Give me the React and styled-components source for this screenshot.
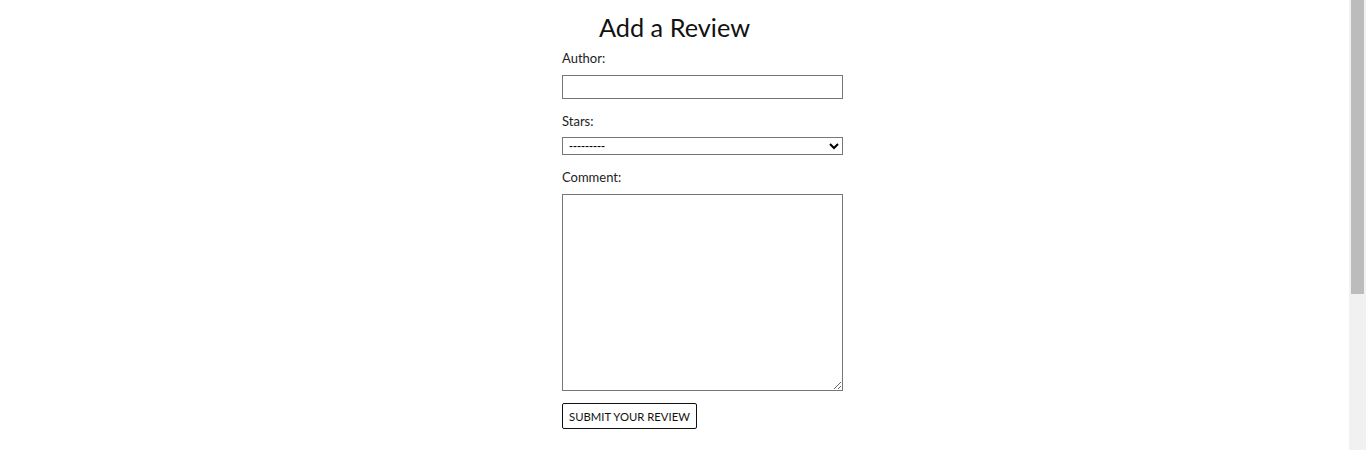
import React from "react"
import styled, { createGlobalStyle } from "styled-components"

const Global = createGlobalStyle`
  html, body {
    margin: 0;
    padding: 0;
    background: #fff;
    overflow: hidden;
  }
  body {
    font-family: 'Lato', 'Liberation Sans', sans-serif;
    color: #111;
  }
`

const Page = styled.div`
  display: flex;
  height: 450px;
`

const Main = styled.main`
  flex: 1;
  display: flex;
  flex-direction: column;
  align-items: center;
`

const Title = styled.h2`
  margin: 10px 0 0;
  height: 34px;
  line-height: 34px;
  font-size: 25.3px;
  font-weight: 400;
  color: #111;
`

const Form = styled.form`
  width: 225px;
  display: flex;
  flex-direction: column;
  align-items: flex-start;
`

const Label = styled.label`
  display: block;
  margin-top: ${p => p.$gap}px;
  height: 16px;
  line-height: 16px;
  font-size: 13px;
  color: #222;
`

const Input = styled.input`
  box-sizing: border-box;
  width: 281px;
  height: 24px;
  margin: 9px 0 0;
  border: 1px solid #767676;
  border-radius: 0;
  padding: 2px 4px;
  font-family: inherit;
`

const Select = styled.select`
  box-sizing: border-box;
  width: 281px;
  height: 18px;
  margin: 8px 0 0;
  border: 1px solid #767676;
  border-radius: 0;
  background: #fff;
  padding: 0 2px;
  font-family: 'Liberation Sans', sans-serif;
  font-size: 12px;
  color: #000;
`

const TextArea = styled.textarea`
  box-sizing: border-box;
  width: 281px;
  height: 197px;
  margin: 9px 0 0;
  border: 1px solid #767676;
  border-radius: 0;
  font-family: inherit;
`

const Button = styled.button`
  box-sizing: border-box;
  margin-top: 12px;
  height: 26px;
  width: 135px;
  padding: 0;
  background: #fff;
  border: 1px solid #111;
  border-radius: 2px;
  font-family: 'Lato', sans-serif;
  font-size: 11.3px;
  color: #111;
  text-transform: uppercase;
`

const Scrollbar = styled.div`
  width: 17px;
  background: #f1f1f1;
  display: flex;
  justify-content: center;
`

const Thumb = styled.div`
  width: 13px;
  height: 294px;
  background: #bcbcbc;
`

export default function App() {
  return (
    <Page>
      <Global />
      <Main>
        <Title>Add a Review</Title>
        <Form onSubmit={e => e.preventDefault()}>
          <Label $gap={6} htmlFor="author">Author:</Label>
          <Input id="author" type="text" />
          <Label $gap={14} htmlFor="stars">Stars:</Label>
          <Select id="stars" defaultValue="">
            <option value="">---------</option>
            <option value="1">1</option>
            <option value="2">2</option>
            <option value="3">3</option>
            <option value="4">4</option>
            <option value="5">5</option>
          </Select>
          <Label $gap={14} htmlFor="comment">Comment:</Label>
          <TextArea id="comment" />
          <Button type="submit">Submit your review</Button>
        </Form>
      </Main>
      <Scrollbar>
        <Thumb />
      </Scrollbar>
    </Page>
  )
}
